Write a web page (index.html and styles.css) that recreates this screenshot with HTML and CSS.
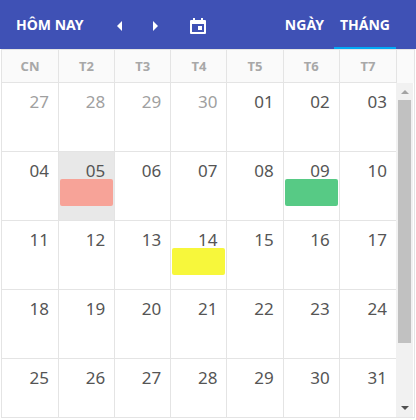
FILE: index.html
```
<!DOCTYPE html>
<html lang="vi">
<head>
<meta charset="utf-8">
<title>Lịch</title>
<link rel="stylesheet" href="styles.css">
</head>
<body>
<div class="scheduler">
  <header class="toolbar">
    <button class="tool today" type="button">HÔM NAY</button>
    <button class="tool icon-button" type="button" aria-label="Trước"><svg width="6" height="10" viewBox="0 0 6 10"><path d="M5 0v10L0 5z" fill="currentColor"/></svg></button>
    <button class="tool icon-button" type="button" aria-label="Sau"><svg width="6" height="10" viewBox="0 0 6 10"><path d="M0 0v10l5-5z" fill="currentColor"/></svg></button>
    <button class="tool icon-button calendar-button" type="button" aria-label="Chọn ngày"><svg width="16" height="16" viewBox="0 0 16 16"><path fill="currentColor" fill-rule="evenodd" d="M3 0h2v2h6V0h2v2h2q1 0 1 1v12q0 1-1 1H1q-1 0-1-1V3q0-1 1-1h2zM2 6v8h12V6zM8 8h4v4H8z"/></svg></button>
    <nav class="views">
      <button class="tool view" type="button">NGÀY</button>
      <button class="tool view active" type="button">THÁNG</button>
    </nav>
  </header>
  <main class="calendar">
    <div class="month-pane">
      <table class="month">
        <thead>
          <tr><th>CN</th><th>T2</th><th>T3</th><th>T4</th><th>T5</th><th>T6</th><th>T7</th></tr>
        </thead>
        <tbody>
          <tr><td class="other">27</td><td class="other">28</td><td class="other">29</td><td class="other">30</td><td>01</td><td>02</td><td>03</td></tr>
          <tr><td>04</td><td class="selected">05<div class="event red"></div></td><td>06</td><td>07</td><td>08</td><td>09<div class="event green"></div></td><td>10</td></tr>
          <tr><td>11</td><td>12</td><td>13</td><td>14<div class="event yellow"></div></td><td>15</td><td>16</td><td>17</td></tr>
          <tr><td>18</td><td>19</td><td>20</td><td>21</td><td>22</td><td>23</td><td>24</td></tr>
          <tr><td>25</td><td>26</td><td>27</td><td>28</td><td>29</td><td>30</td><td>31</td></tr>
        </tbody>
      </table>
    </div>
    <div class="side">
      <div class="corner"></div>
      <div class="scrollbar">
        <svg class="arrow" width="17" height="17" viewBox="0 0 17 17"><path d="M5 11h8L9 7z" fill="#a3a3a3"/></svg>
        <div class="track"><div class="thumb"></div></div>
        <svg class="arrow" width="17" height="17" viewBox="0 0 17 17"><path d="M5 6h8L9 10z" fill="#505050"/></svg>
      </div>
    </div>
  </main>
</div>
</body>
</html>
```
FILE: styles.css
```
* {
  box-sizing: border-box;
}

body {
  margin: 0;
  background: #fff;
  font-family: "Noto Sans", "Open Sans", sans-serif;
}

.scheduler {
  display: flex;
  flex-direction: column;
  height: 100vh;
  padding-bottom: 2px;
}

.toolbar {
  display: flex;
  flex: none;
  height: 49px;
  padding-right: 20px;
  background: #3f51b5;
}

.tool {
  margin: 0;
  padding: 0;
  border: 0;
  background: none;
  color: #fff;
  font: 700 14px/20px "Noto Sans", "Open Sans", sans-serif;
}

.today {
  padding: 0 18px 0 16px;
}

.icon-button {
  display: flex;
  align-items: center;
  justify-content: center;
  width: 36px;
  padding-top: 2px;
}

.calendar-button {
  width: 48px;
}

.views {
  display: flex;
  gap: 4px;
  margin-left: auto;
}

.view {
  padding: 2px 6px 0;
  border-bottom: 2px solid transparent;
}

.view.active {
  border-color: #03a9f4;
}

.calendar {
  display: flex;
  flex: 1;
  min-height: 0;
  margin: 0 1px;
  overflow: hidden;
  border: 1px solid #e4e4e4;
}

.month-pane {
  flex: 1;
  min-width: 0;
}

.month {
  width: 100%;
  table-layout: fixed;
  border-spacing: 0;
}

th,
td {
  border-right: 1px solid #e4e4e4;
  border-bottom: 1px solid #e4e4e4;
}

th:last-child,
td:last-child {
  border-right: 0;
}

th {
  height: 33px;
  padding: 0;
  background: #fafafa;
  color: #a8a8a8;
  font: 700 13px/20px "Noto Sans", "Open Sans", sans-serif;
}

th:first-child {
  width: 57px;
}

td {
  height: 69px;
  padding: 11px 9px 0 1px;
  color: #555;
  font-size: 17px;
  line-height: 16px;
  text-align: right;
  vertical-align: top;
}

.other {
  color: #a0a0a0;
}

.selected {
  background: #e8e8e8;
}

.event {
  height: 27px;
  margin-right: -8px;
  border-radius: 2px;
}

.red {
  background: #f7a398;
}

.green {
  background: #57ca85;
}

.yellow {
  background: #f7f73b;
}

.side {
  display: flex;
  flex: none;
  flex-direction: column;
  width: 18px;
}

.corner {
  flex: none;
  height: 33px;
  border-left: 1px solid #e4e4e4;
  background: #fafafa;
}

.scrollbar {
  display: flex;
  flex: 1;
  flex-direction: column;
  width: 17px;
  background: #f1f1f1;
}

.arrow {
  flex: none;
}

.track {
  flex: 1;
  padding: 0 2px;
}

.thumb {
  height: 81%;
  background: #c1c1c1;
}
```
